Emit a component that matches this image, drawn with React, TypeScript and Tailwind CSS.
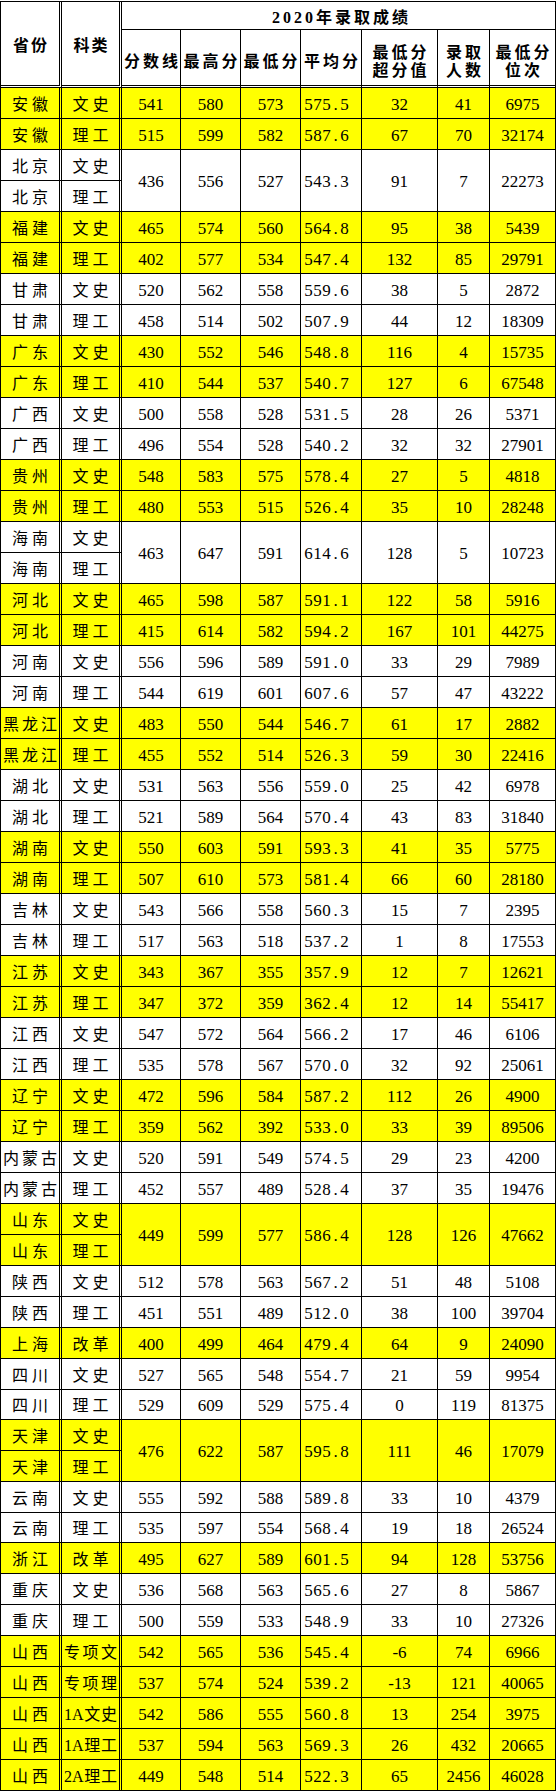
import React from "react";

type Row = {
  p: string;
  t: string;
  v?: string[];
  y?: boolean;
  span?: boolean;
};

const rows: Row[] = [
  { p: "安徽", t: "文史", v: ["541", "580", "573", "575.5", "32", "41", "6975"], y: true },
  { p: "安徽", t: "理工", v: ["515", "599", "582", "587.6", "67", "70", "32174"], y: true },
  { p: "北京", t: "文史", v: ["436", "556", "527", "543.3", "91", "7", "22273"], span: true },
  { p: "北京", t: "理工" },
  { p: "福建", t: "文史", v: ["465", "574", "560", "564.8", "95", "38", "5439"], y: true },
  { p: "福建", t: "理工", v: ["402", "577", "534", "547.4", "132", "85", "29791"], y: true },
  { p: "甘肃", t: "文史", v: ["520", "562", "558", "559.6", "38", "5", "2872"] },
  { p: "甘肃", t: "理工", v: ["458", "514", "502", "507.9", "44", "12", "18309"] },
  { p: "广东", t: "文史", v: ["430", "552", "546", "548.8", "116", "4", "15735"], y: true },
  { p: "广东", t: "理工", v: ["410", "544", "537", "540.7", "127", "6", "67548"], y: true },
  { p: "广西", t: "文史", v: ["500", "558", "528", "531.5", "28", "26", "5371"] },
  { p: "广西", t: "理工", v: ["496", "554", "528", "540.2", "32", "32", "27901"] },
  { p: "贵州", t: "文史", v: ["548", "583", "575", "578.4", "27", "5", "4818"], y: true },
  { p: "贵州", t: "理工", v: ["480", "553", "515", "526.4", "35", "10", "28248"], y: true },
  { p: "海南", t: "文史", v: ["463", "647", "591", "614.6", "128", "5", "10723"], span: true },
  { p: "海南", t: "理工" },
  { p: "河北", t: "文史", v: ["465", "598", "587", "591.1", "122", "58", "5916"], y: true },
  { p: "河北", t: "理工", v: ["415", "614", "582", "594.2", "167", "101", "44275"], y: true },
  { p: "河南", t: "文史", v: ["556", "596", "589", "591.0", "33", "29", "7989"] },
  { p: "河南", t: "理工", v: ["544", "619", "601", "607.6", "57", "47", "43222"] },
  { p: "黑龙江", t: "文史", v: ["483", "550", "544", "546.7", "61", "17", "2882"], y: true },
  { p: "黑龙江", t: "理工", v: ["455", "552", "514", "526.3", "59", "30", "22416"], y: true },
  { p: "湖北", t: "文史", v: ["531", "563", "556", "559.0", "25", "42", "6978"] },
  { p: "湖北", t: "理工", v: ["521", "589", "564", "570.4", "43", "83", "31840"] },
  { p: "湖南", t: "文史", v: ["550", "603", "591", "593.3", "41", "35", "5775"], y: true },
  { p: "湖南", t: "理工", v: ["507", "610", "573", "581.4", "66", "60", "28180"], y: true },
  { p: "吉林", t: "文史", v: ["543", "566", "558", "560.3", "15", "7", "2395"] },
  { p: "吉林", t: "理工", v: ["517", "563", "518", "537.2", "1", "8", "17553"] },
  { p: "江苏", t: "文史", v: ["343", "367", "355", "357.9", "12", "7", "12621"], y: true },
  { p: "江苏", t: "理工", v: ["347", "372", "359", "362.4", "12", "14", "55417"], y: true },
  { p: "江西", t: "文史", v: ["547", "572", "564", "566.2", "17", "46", "6106"] },
  { p: "江西", t: "理工", v: ["535", "578", "567", "570.0", "32", "92", "25061"] },
  { p: "辽宁", t: "文史", v: ["472", "596", "584", "587.2", "112", "26", "4900"], y: true },
  { p: "辽宁", t: "理工", v: ["359", "562", "392", "533.0", "33", "39", "89506"], y: true },
  { p: "内蒙古", t: "文史", v: ["520", "591", "549", "574.5", "29", "23", "4200"] },
  { p: "内蒙古", t: "理工", v: ["452", "557", "489", "528.4", "37", "35", "19476"] },
  { p: "山东", t: "文史", v: ["449", "599", "577", "586.4", "128", "126", "47662"], y: true, span: true },
  { p: "山东", t: "理工", y: true },
  { p: "陕西", t: "文史", v: ["512", "578", "563", "567.2", "51", "48", "5108"] },
  { p: "陕西", t: "理工", v: ["451", "551", "489", "512.0", "38", "100", "39704"] },
  { p: "上海", t: "改革", v: ["400", "499", "464", "479.4", "64", "9", "24090"], y: true },
  { p: "四川", t: "文史", v: ["527", "565", "548", "554.7", "21", "59", "9954"] },
  { p: "四川", t: "理工", v: ["529", "609", "529", "575.4", "0", "119", "81375"] },
  { p: "天津", t: "文史", v: ["476", "622", "587", "595.8", "111", "46", "17079"], y: true, span: true },
  { p: "天津", t: "理工", y: true },
  { p: "云南", t: "文史", v: ["555", "592", "588", "589.8", "33", "10", "4379"] },
  { p: "云南", t: "理工", v: ["535", "597", "554", "568.4", "19", "18", "26524"] },
  { p: "浙江", t: "改革", v: ["495", "627", "589", "601.5", "94", "128", "53756"], y: true },
  { p: "重庆", t: "文史", v: ["536", "568", "563", "565.6", "27", "8", "5867"] },
  { p: "重庆", t: "理工", v: ["500", "559", "533", "548.9", "33", "10", "27326"] },
  { p: "山西", t: "专项文", v: ["542", "565", "536", "545.4", "-6", "74", "6966"], y: true },
  { p: "山西", t: "专项理", v: ["537", "574", "524", "539.2", "-13", "121", "40065"], y: true },
  { p: "山西", t: "1A文史", v: ["542", "586", "555", "560.8", "13", "254", "3975"], y: true },
  { p: "山西", t: "1A理工", v: ["537", "594", "563", "569.3", "26", "432", "20665"], y: true },
  { p: "山西", t: "2A理工", v: ["449", "548", "514", "522.3", "65", "2456", "46028"], y: true },
];

const cell = "flex items-center border-r border-b border-black";
const dbl = "border-double border-r-[3px]";

// chinese text spread like the excel cells
const Zh = ({ text, gap = "gap-[4px]" }: { text: string; gap?: string }) => {
  const toks = text.match(/[0-9A-Za-z]+|./g) || [];
  if (toks.length >= 3) {
    return (
      <div className="flex w-full justify-between px-[2px]">
        {toks.map((c, i) => (
          <span key={i}>{c}</span>
        ))}
      </div>
    );
  }
  return (
    <div className={`flex ${gap}`}>
      {toks.map((c, i) => (
        <span key={i}>{c}</span>
      ))}
    </div>
  );
};

const Head = ({ lines }: { lines: string[] }) => (
  <div className="flex flex-col items-center leading-[18px]">
    {lines.map((l) => (
      <div key={l} className="flex gap-[3px]">
        {l.split("").map((c, i) => (
          <span key={i}>{c}</span>
        ))}
      </div>
    ))}
  </div>
);

const Avg = ({ v }: { v: string }) => (
  <span className="flex">
    {v.split("").map((c, i) => (
      <span key={i} className="inline-block w-[9px] text-center">
        {c}
      </span>
    ))}
  </span>
);

export default function App() {
  return (
    <div className="min-h-screen bg-white font-['Liberation_Serif','Noto_Sans_CJK_SC',serif] text-black">
      <div className="mt-px grid w-fit grid-cols-[61px_60px_59px_60px_60px_61px_76px_52px_66px] border-l border-t border-black">
        {/* header */}
        <div className={`${cell} ${dbl} row-span-2 justify-center border-b-[3px] pt-[5px] text-[16px] font-bold`}>
          <Zh text="省份" gap="gap-[2px]" />
        </div>
        <div className={`${cell} ${dbl} row-span-2 justify-center border-b-[3px] pt-[5px] text-[16px] font-bold`}>
          <Zh text="科类" gap="gap-[2px]" />
        </div>
        <div className={`${cell} col-span-7 h-[28px] justify-center pt-[4px] pl-[3px] text-[16px] font-bold`}>
          <Head lines={["2020年录取成绩"]} />
        </div>
        {[["分数线"], ["最高分"], ["最低分"], ["平均分"], ["最低分", "超分值"], ["录取", "人数"], ["最低分", "位次"]].map((h, i) => (
          <div key={i} className={`${cell} h-[58px] justify-center border-double border-b-[3px] pt-[9px] text-[16px] font-bold`}>
            <Head lines={h} />
          </div>
        ))}

        {/* data rows */}
        {rows.map((r, i) => {
          const bg = r.y ? "bg-[#ffff00]" : "bg-white";
          const h = i === 42 || i === 46 ? "h-[30px]" : "h-[31px]";
          return (
            <React.Fragment key={i}>
              <div className={`${cell} ${dbl} ${bg} ${h} justify-center pt-[3px] text-[16px]`}>
                <Zh text={r.p} />
              </div>
              <div className={`${cell} ${dbl} ${bg} justify-center pt-[3px] text-[16px]`}>
                <Zh text={r.t} />
              </div>
              {r.v?.map((v, j) => (
                <div
                  key={j}
                  className={`${cell} ${bg} ${r.span ? "row-span-2" : ""} ${j === 3 ? "justify-start pl-[3px]" : "justify-center"} pt-[3px] text-[17px]`}
                >
                  {j === 3 ? <Avg v={v} /> : v}
                </div>
              ))}
            </React.Fragment>
          );
        })}
      </div>
    </div>
  );
}
